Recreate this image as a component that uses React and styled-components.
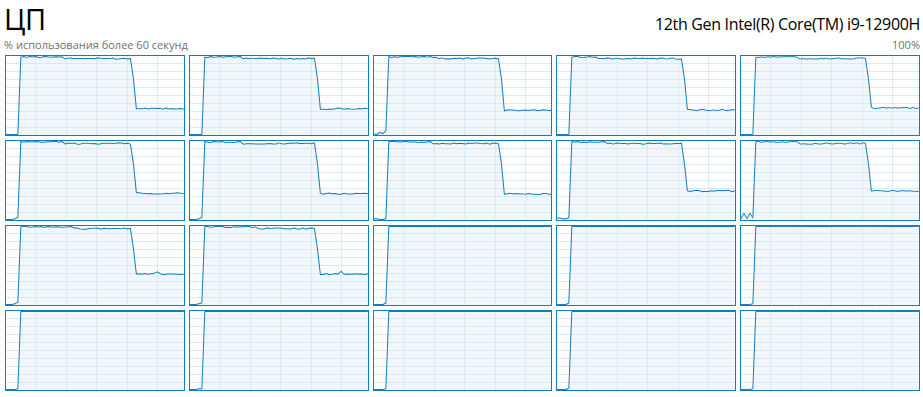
import React from "react";
import styled, { createGlobalStyle } from "styled-components";

const GlobalStyle = createGlobalStyle`
  html, body { margin: 0; padding: 0; background: #ffffff; }
  body { font-family: "Open Sans", "Noto Sans", Arial, sans-serif; color: #000; }
`;

const Page = styled.div`
  width: 923px;
  height: 397px;
  box-sizing: border-box;
  padding: 0 3px 0 4px;
  overflow: hidden;
`;

const Header = styled.div`
  display: flex;
  justify-content: space-between;
  align-items: baseline;
  height: 37px;
`;

const Title = styled.h1`
  margin: 0;
  font-size: 29px;
  font-weight: 400;
  line-height: 37px;
  letter-spacing: -0.5px;
`;

const CpuName = styled.div`
  font-size: 16px;
  line-height: 37px;
  letter-spacing: -0.33px;
  color: #000;
`;

const SubRow = styled.div`
  display: flex;
  justify-content: space-between;
  align-items: baseline;
  height: 16px;
  font-size: 11px;
  line-height: 16px;
  color: #707070;
`;

const Grid = styled.div`
  display: grid;
  grid-template-columns: repeat(5, 1fr);
  grid-auto-rows: 81px;
  gap: 4px;
  margin: 2px 0 0 1px;
`;

const ChartBox = styled.div`
  box-sizing: border-box;
  border: 1px solid #117dbb;
  background: #ffffff;
  overflow: hidden;
`;

const ChartSvg = styled.svg`
  display: block;
  width: 100%;
  height: 100%;
`;

const W = 177;
const H = 79;
const N = 60;

const rnd = (seed, i) => {
  const v = Math.sin(seed * 12.9898 + i * 78.233) * 43758.5453;
  return v - Math.floor(v);
};

const configs = [
  { pre: [0, 0, 0, 0, 0], low: 33, split: 20 },
  { pre: [0, 0, 0, 0, 0], low: 33, split: 18 },
  { pre: [1, 0, 3, 1, 5], low: 31, split: 22 },
  { pre: [0, 0, 0, 0, 0], low: 31.5, split: 14 },
  { pre: [0, 0, 0, 0, 0], low: 34, split: 20 },
  { pre: [0, 0, 0, 1, 3], low: 33.5, split: 20 },
  { pre: [0, 0, 0, 1, 3], low: 33, split: 18 },
  { pre: [1, 1, 0, 0, 1], low: 32.7, split: 20 },
  { pre: [2, 2, 1, 1, 2], low: 36.5, split: 17 },
  { pre: [1, 8, 1, 8, 2], low: 36.5, split: 20 },
  { pre: [0, 0, 0, 1, 3], low: 39, split: 23, bump: true },
  { pre: [0, 0, 0, 1, 2], low: 39, split: 23, bump: true },
  { pre: [0, 0, 0, 0, 2], full: true },
  { pre: [0, 0, 0, 0, 2], full: true },
  { pre: [0, 0, 0, 0, 1], full: true },
  { pre: [0, 0, 0, 0, 1], full: true },
  { pre: [0, 0, 0, 1, 1], full: true },
  { pre: [0, 0, 0, 0, 1], full: true },
  { pre: [0, 0, 0, 0, 2], full: true },
  { pre: [0, 0, 0, 0, 1], full: true },
];

const buildSeries = (cfg, seed) => {
  const vals = [];
  for (let i = 0; i <= N; i++) {
    if (i < 5) vals.push(cfg.pre[i]);
    else if (cfg.full) vals.push(100);
    else if (i <= 42) {
      const base = i < cfg.split ? 99.6 : 97.4;
      vals.push(Math.min(100, base + (rnd(seed, i) - 0.5) * 1.8));
    } else if (i === 43) vals.push(72);
    else {
      let v = cfg.low + (rnd(seed + 7, i) - 0.5) * 1.8;
      if (cfg.bump && i === 51) v += 3;
      vals.push(v);
    }
  }
  return vals;
};

const toY = (v) => 0.5 + (1 - v / 100) * (H - 1);

const vLines = [0, 1, 2, 3, 4].map((k) => 29.5 + 30.4 * k);
const hLines = [0, 1, 2, 3, 4, 5, 6, 7, 8].map((k) => 7.5 + 8 * k);

const CpuChart = ({ cfg, seed }) => {
  const vals = buildSeries(cfg, seed);
  const pts = vals.map((v, i) => `${((i * W) / N).toFixed(2)},${toY(v).toFixed(2)}`);
  const line = pts.join(" ");
  const area = `0,${H} ${line} ${W},${H}`;
  return (
    <ChartBox>
      <ChartSvg viewBox={`0 0 ${W} ${H}`} preserveAspectRatio="none">
        <polygon points={area} fill="#f1f6fa" />
        {vLines.map((x) => (
          <line key={`v${x}`} x1={x} x2={x} y1={0} y2={H} stroke="#d9eaf4" strokeWidth="1" vectorEffect="non-scaling-stroke" shapeRendering="crispEdges" />
        ))}
        {hLines.map((y) => (
          <line key={`h${y}`} x1={0} x2={W} y1={y} y2={y} stroke="#d9eaf4" strokeWidth="1" vectorEffect="non-scaling-stroke" shapeRendering="crispEdges" />
        ))}
        <polyline points={line} fill="none" stroke="#117dbb" strokeWidth="1" vectorEffect="non-scaling-stroke" strokeLinejoin="round" />
      </ChartSvg>
    </ChartBox>
  );
};

export default function App() {
  return (
    <>
      <GlobalStyle />
      <Page>
        <Header>
          <Title>ЦП</Title>
          <CpuName>12th Gen Intel(R) Core(TM) i9-12900H</CpuName>
        </Header>
        <SubRow>
          <span>% использования более 60 секунд</span>
          <span>100%</span>
        </SubRow>
        <Grid>
          {configs.map((cfg, i) => (
            <CpuChart key={i} cfg={cfg} seed={i + 1} />
          ))}
        </Grid>
      </Page>
    </>
  );
}
